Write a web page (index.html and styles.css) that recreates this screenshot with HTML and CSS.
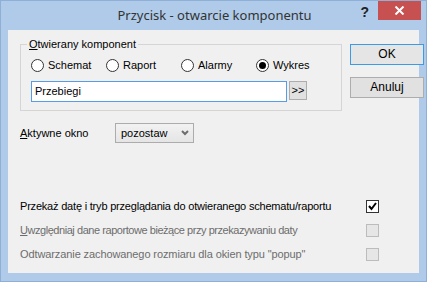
FILE: index.html
```html
<!DOCTYPE html>
<html lang="pl">
<head>
<meta charset="utf-8">
<title>Przycisk - otwarcie komponentu</title>
<link rel="stylesheet" href="styles.css">
</head>
<body>
<div class="window">
  <div class="titlebar">
    <div></div>
    <div class="title">Przycisk - otwarcie komponentu</div>
    <div class="controls">
      <span class="help">?</span>
      <span class="close"><svg width="11" height="9" viewBox="0 0 11 9"><path d="M1.5 0.5 L9.5 8.5 M9.5 0.5 L1.5 8.5" stroke="#fff" stroke-width="2" fill="none"/></svg></span>
    </div>
  </div>
  <div class="content">
    <div class="top">
      <fieldset class="group">
        <legend class="legend"><u>O</u>twierany komponent</legend>
        <div class="radios">
          <label class="radio"><span class="circle"></span>Schemat</label>
          <label class="radio"><span class="circle"></span>Raport</label>
          <label class="radio"><span class="circle"></span>Alarmy</label>
          <label class="radio"><span class="circle checked"></span>Wykres</label>
        </div>
        <div class="inputrow">
          <div class="input">Przebiegi</div>
          <div class="browse">&gt;&gt;</div>
        </div>
      </fieldset>
      <div class="buttons">
        <div class="btn default">OK</div>
        <div class="btn">Anuluj</div>
      </div>
    </div>
    <div class="activerow">
      <span class="activelabel"><u>A</u>ktywne okno</span>
      <div class="combo">
        <span>pozostaw</span>
        <svg width="8" height="6" viewBox="0 0 8 6"><path d="M1 1 L4 4 L7 1" stroke="#6d6d6d" stroke-width="2" fill="none"/></svg>
      </div>
    </div>
    <div class="checks">
      <div class="checkrow">
        <span class="t1">Przekaż datę i tryb przeglądania do otwieranego schematu/raportu</span>
        <span class="box on"><svg width="11" height="11" viewBox="0 0 11 11"><path d="M2 5 L4.5 8 L9 2" stroke="#000" stroke-width="2" fill="none"/></svg></span>
      </div>
      <div class="checkrow disabled">
        <span class="t2"><u>U</u>względniaj dane raportowe bieżące przy przekazywaniu daty</span>
        <span class="box"></span>
      </div>
      <div class="checkrow disabled">
        <span class="t3">Odtwarzanie zachowanego rozmiaru dla okien typu "popup"</span>
        <span class="box"></span>
      </div>
    </div>
  </div>
</div>
</body>
</html>
```

FILE: styles.css
```css
html, body {
  margin: 0;
  padding: 0;
}
body {
  font-family: "Liberation Sans", Arial, sans-serif;
  font-size: 11px;
  color: #000;
}
.window {
  width: 427px;
  height: 282px;
  box-sizing: border-box;
  background: #afcbe9;
  border: 1px solid #8fb0d6;
  display: flex;
  flex-direction: column;
}
.titlebar {
  height: 29px;
  display: grid;
  grid-template-columns: 1fr auto 1fr;
}
.title {
  font-family: "Noto Sans", sans-serif;
  font-size: 13px;
  color: #333;
  line-height: 29px;
  padding-left: 2px;
}
.controls {
  display: flex;
  justify-content: flex-end;
  align-items: flex-start;
  padding-right: 5px;
}
.help {
  font-family: "Liberation Sans", Arial, sans-serif;
  font-weight: bold;
  font-size: 14px;
  color: #222;
  margin-top: 3px;
  margin-right: 9px;
}
.close {
  width: 43px;
  height: 19px;
  background: #c75050;
  display: flex;
  align-items: center;
  justify-content: center;
}
.content {
  flex: 1;
  margin: 0 7px 8px 7px;
  background: #f0f0f0;
}
.top {
  display: flex;
  margin-top: 8px;
  padding-left: 12px;
}
.group {
  width: 305px;
  box-sizing: border-box;
  margin: 0;
  padding: 0 10px 8px 10px;
  border: 1px solid #d5d5d5;
}
.legend {
  padding: 0 2px;
  margin-left: -4px;
  line-height: 13px;
}
.radios {
  display: grid;
  grid-template-columns: repeat(4, 75px);
  margin-top: 8px;
  height: 13px;
}
.radio {
  display: flex;
  align-items: center;
  gap: 4px;
  line-height: 13px;
}
.circle {
  width: 11px;
  height: 11px;
  border: 1px solid #333;
  border-radius: 50%;
  background: #fff;
  box-sizing: content-box;
  flex: none;
  display: flex;
  align-items: center;
  justify-content: center;
}
.circle.checked::after {
  content: "";
  width: 7px;
  height: 7px;
  border-radius: 50%;
  background: #000;
}
.inputrow {
  display: flex;
  align-items: flex-start;
  gap: 2px;
  margin-top: 9px;
}
.input {
  width: 256px;
  height: 21px;
  box-sizing: border-box;
  border: 1px solid #569de5;
  background: #fff;
  padding-left: 3px;
  line-height: 19px;
  font-size: 11px;
}
.browse {
  width: 18px;
  height: 19px;
  box-sizing: border-box;
  border: 1px solid #adadad;
  background: #e1e1e1;
  text-align: center;
  line-height: 17px;
  font-size: 11px;
}
.buttons {
  display: flex;
  flex-direction: column;
  gap: 12px;
  margin-left: 8px;
  margin-top: 6px;
}
.btn {
  width: 74px;
  height: 21px;
  box-sizing: border-box;
  border: 1px solid #adadad;
  background: #e1e1e1;
  text-align: center;
  line-height: 19px;
  font-size: 12px;
}
.btn.default {
  border-color: #3c9be6;
  background: #e5e5e5;
}
.activerow {
  display: flex;
  align-items: center;
  margin-top: 12px;
  padding-left: 12px;
  height: 20px;
}
.activelabel {
  width: 95px;
  font-size: 11px;
}
.combo {
  width: 79px;
  height: 20px;
  box-sizing: border-box;
  border: 1px solid #acacac;
  background: linear-gradient(#f2f2f2, #e5e5e5);
  display: flex;
  align-items: center;
  justify-content: space-between;
  padding: 0 4px 0 5px;
  font-size: 11px;
}
.checks {
  margin-top: 51px;
  padding-left: 12px;
}
.checkrow {
  width: 359px;
  height: 24px;
  display: flex;
  align-items: center;
  justify-content: space-between;
  font-size: 11px;
  white-space: nowrap;
}
.t1 {
  letter-spacing: -0.2px;
}
.t2 {
  letter-spacing: -0.45px;
}
.t3 {
  letter-spacing: -0.1px;
}
.checkrow.disabled {
  color: #6d6d6d;
}
.box {
  width: 13px;
  height: 13px;
  box-sizing: border-box;
  border: 1px solid #bcbcbc;
  background: #e6e6e6;
  display: flex;
  align-items: center;
  justify-content: center;
}
.box.on {
  border-color: #333;
  background: #fff;
}
```
